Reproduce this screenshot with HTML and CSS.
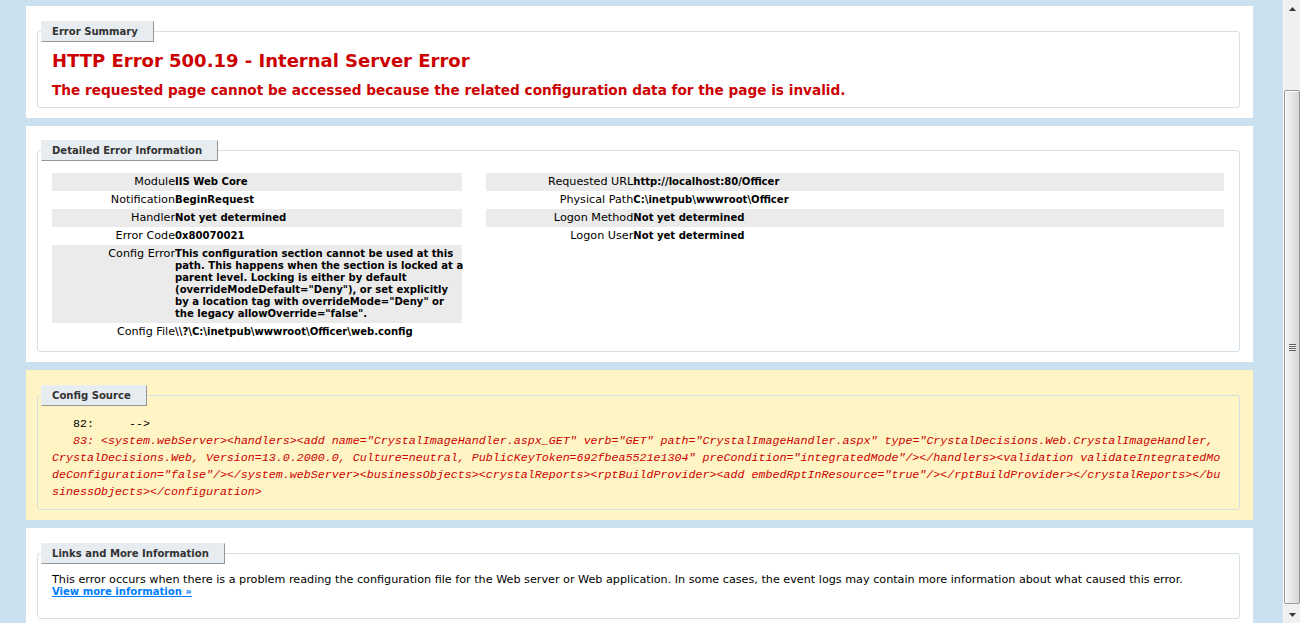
FILE: index.html
```html
<!DOCTYPE html>
<html lang="en">
<head>
<meta charset="utf-8">
<title>IIS 7.5 Detailed Error - 500.19 - Internal Server Error</title>
<link rel="stylesheet" href="styles.css">
</head>
<body>
<div class="page">
  <div class="content">
    <div class="container summary">
      <fieldset>
        <legend>Error Summary</legend>
        <h2>HTTP Error 500.19 - Internal Server Error</h2>
        <h3>The requested page cannot be accessed because the related configuration data for the page is invalid.</h3>
      </fieldset>
    </div>

    <div class="container detailed">
      <fieldset>
        <legend>Detailed Error Information</legend>
        <div class="details">
          <div class="details-left">
            <table>
              <tr class="alt"><th>Module</th><td>IIS Web Core</td></tr>
              <tr><th>Notification</th><td>BeginRequest</td></tr>
              <tr class="alt"><th>Handler</th><td>Not yet determined</td></tr>
              <tr><th>Error Code</th><td>0x80070021</td></tr>
              <tr class="alt"><th>Config Error</th><td>This configuration section cannot be used at this<br>path. This happens when the section is locked at a<br>parent level. Locking is either by default<br>(overrideModeDefault="Deny"), or set explicitly<br>by a location tag with overrideMode="Deny" or<br>the legacy allowOverride="false".</td></tr>
              <tr><th>Config File</th><td>\\?\C:\inetpub\wwwroot\Officer\web.config</td></tr>
            </table>
          </div>
          <div class="details-right">
            <table>
              <tr class="alt"><th>Requested URL</th><td>http://localhost:80/Officer</td></tr>
              <tr><th>Physical Path</th><td>C:\inetpub\wwwroot\Officer</td></tr>
              <tr class="alt"><th>Logon Method</th><td>Not yet determined</td></tr>
              <tr><th>Logon User</th><td>Not yet determined</td></tr>
            </table>
          </div>
        </div>
      </fieldset>
    </div>

    <div class="container config-source">
      <fieldset>
        <legend>Config Source</legend>
        <pre><code>   82:     --&gt;
<span class="highlight-code">   83: &lt;system.webServer&gt;&lt;handlers&gt;&lt;add name="CrystalImageHandler.aspx_GET" verb="GET" path="CrystalImageHandler.aspx" type="CrystalDecisions.Web.CrystalImageHandler, CrystalDecisions.Web, Version=13.0.2000.0, Culture=neutral, PublicKeyToken=692fbea5521e1304" preCondition="integratedMode"/&gt;&lt;/handlers&gt;&lt;validation validateIntegratedModeConfiguration="false"/&gt;&lt;/system.webServer&gt;&lt;businessObjects&gt;&lt;crystalReports&gt;&lt;rptBuildProvider&gt;&lt;add embedRptInResource="true"/&gt;&lt;/rptBuildProvider&gt;&lt;/crystalReports&gt;&lt;/businessObjects&gt;&lt;/configuration&gt;</span></code></pre>
      </fieldset>
    </div>

    <div class="container links">
      <fieldset>
        <legend>Links and More Information</legend>
        This error occurs when there is a problem reading the configuration file for the Web server or Web application. In some cases, the event logs may contain more information about what caused this error.
        <p><a href="#">View more information &raquo;</a></p>
      </fieldset>
    </div>
  </div>
</div>

<div class="scrollbar">
  <div class="sb-btn">
    <svg width="7" height="4" viewBox="0 0 7 4"><polygon points="0,4 3.5,0 7,4" fill="#3c3c3c"/></svg>
  </div>
  <div class="sb-track">
    <div class="sb-thumb">
      <span class="grip"></span>
    </div>
  </div>
  <div class="sb-btn">
    <svg width="7" height="4" viewBox="0 0 7 4"><polygon points="0,0 7,0 3.5,4" fill="#3c3c3c"/></svg>
  </div>
</div>
</body>
</html>
```

FILE: styles.css
```css
html, body {
  margin: 0;
  height: 100%;
}

body {
  background: #CBE1EF;
  font-family: "DejaVu Sans", Verdana, sans-serif;
  font-size: 11.2px;
  line-height: 12px;
  color: #000;
  display: flex;
  overflow: hidden;
}

.page {
  flex: 1;
  min-width: 0;
  overflow: hidden;
}

.content {
  margin-left: 26px;
  width: 1227px;
}

.container {
  background: #FFFFFF;
  padding: 10px;
  margin-top: 8px;
}

.container:first-child {
  margin-top: 6px;
}

.config-source {
  background: #FFF5C4;
}

fieldset {
  margin: 5px 3px 0 1px;
  padding: 0 15px 10px 14px;
  border: 1px solid #D5DFE6;
  border-radius: 3px;
  min-width: 0;
}

.summary fieldset {
  padding-bottom: 9px;
}

.detailed fieldset {
  margin-top: 4px;
}

.config-source fieldset {
  margin-top: 5px;
  padding-bottom: 8px;
}

legend,
td,
a {
  font-family: "DejaVu Sans Condensed", "DejaVu Sans", Verdana, sans-serif;
  font-stretch: semi-condensed;
}

legend {
  color: #333333;
  padding: 4px 15px 3px 10px;
  margin: 0 0 8px -11px;
  border-top: 1px solid #EDEDED;
  border-left: 1px solid #EDEDED;
  border-right: 1px solid #969696;
  border-bottom: 1px solid #969696;
  background: #E7ECF0;
  font-weight: bold;
  line-height: 12px;
}

h2 {
  font-size: 18px;
  line-height: 22px;
  margin: 0;
  color: #CC0000;
}

h3 {
  font-size: 13.64px;
  line-height: 16px;
  margin: 10px 0 0 0;
  color: #CC0000;
}

.details {
  display: flex;
}

.details-left {
  width: 35%;
  margin-right: 2%;
}

.details-right {
  width: 63%;
}

table {
  width: 100%;
  table-layout: fixed;
  border-collapse: collapse;
  margin: 4px 0 0 0;
}

th, td {
  vertical-align: top;
  padding: 3px 0;
  text-align: left;
  font-weight: bold;
}

td {
  white-space: nowrap;
}

th {
  width: 30%;
  text-align: right;
  font-weight: normal;
}

.details-right th {
  width: 20%;
}

tr.alt th, tr.alt td {
  background: #EBEBEB;
}

pre {
  margin: 2px 0 0 0;
  font-family: "Liberation Mono", "Courier New", monospace;
  line-height: 17px;
  white-space: pre-wrap;
  word-break: break-all;
}

pre code {
  font-family: "Liberation Mono", "Courier New", monospace;
  font-size: 11.66px;
  color: #000000;
}

.highlight-code {
  color: #CC0000;
  font-style: italic;
}

.links fieldset {
  padding-top: 2px;
}

p {
  margin: 0 0 10px 0;
}

a {
  color: #007EFF;
  font-weight: bold;
}

/* fake classic scrollbar */
.scrollbar {
  width: 17px;
  flex: none;
  height: 100%;
  display: flex;
  flex-direction: column;
  background: #F0F0F0;
  border-left: 1px solid #FAFAFA;
  box-sizing: border-box;
}

.sb-btn {
  height: 17px;
  flex: none;
  display: flex;
  align-items: center;
  justify-content: center;
}

.sb-track {
  flex: 1;
  padding-top: 73px;
}

.sb-thumb {
  height: 514px;
  border: 1px solid #979797;
  border-radius: 2px;
  box-sizing: border-box;
  background: linear-gradient(to right, #F4F4F4 0%, #E8E8E8 45%, #D6D6D6 100%);
  box-shadow: inset 1px 1px 0 #FFFFFF;
  display: flex;
  align-items: center;
  justify-content: center;
}

.grip {
  width: 7px;
  height: 7px;
  background: repeating-linear-gradient(to bottom, #5E5E5E 0 1px, #F2F2F2 1px 2px);
}
```
